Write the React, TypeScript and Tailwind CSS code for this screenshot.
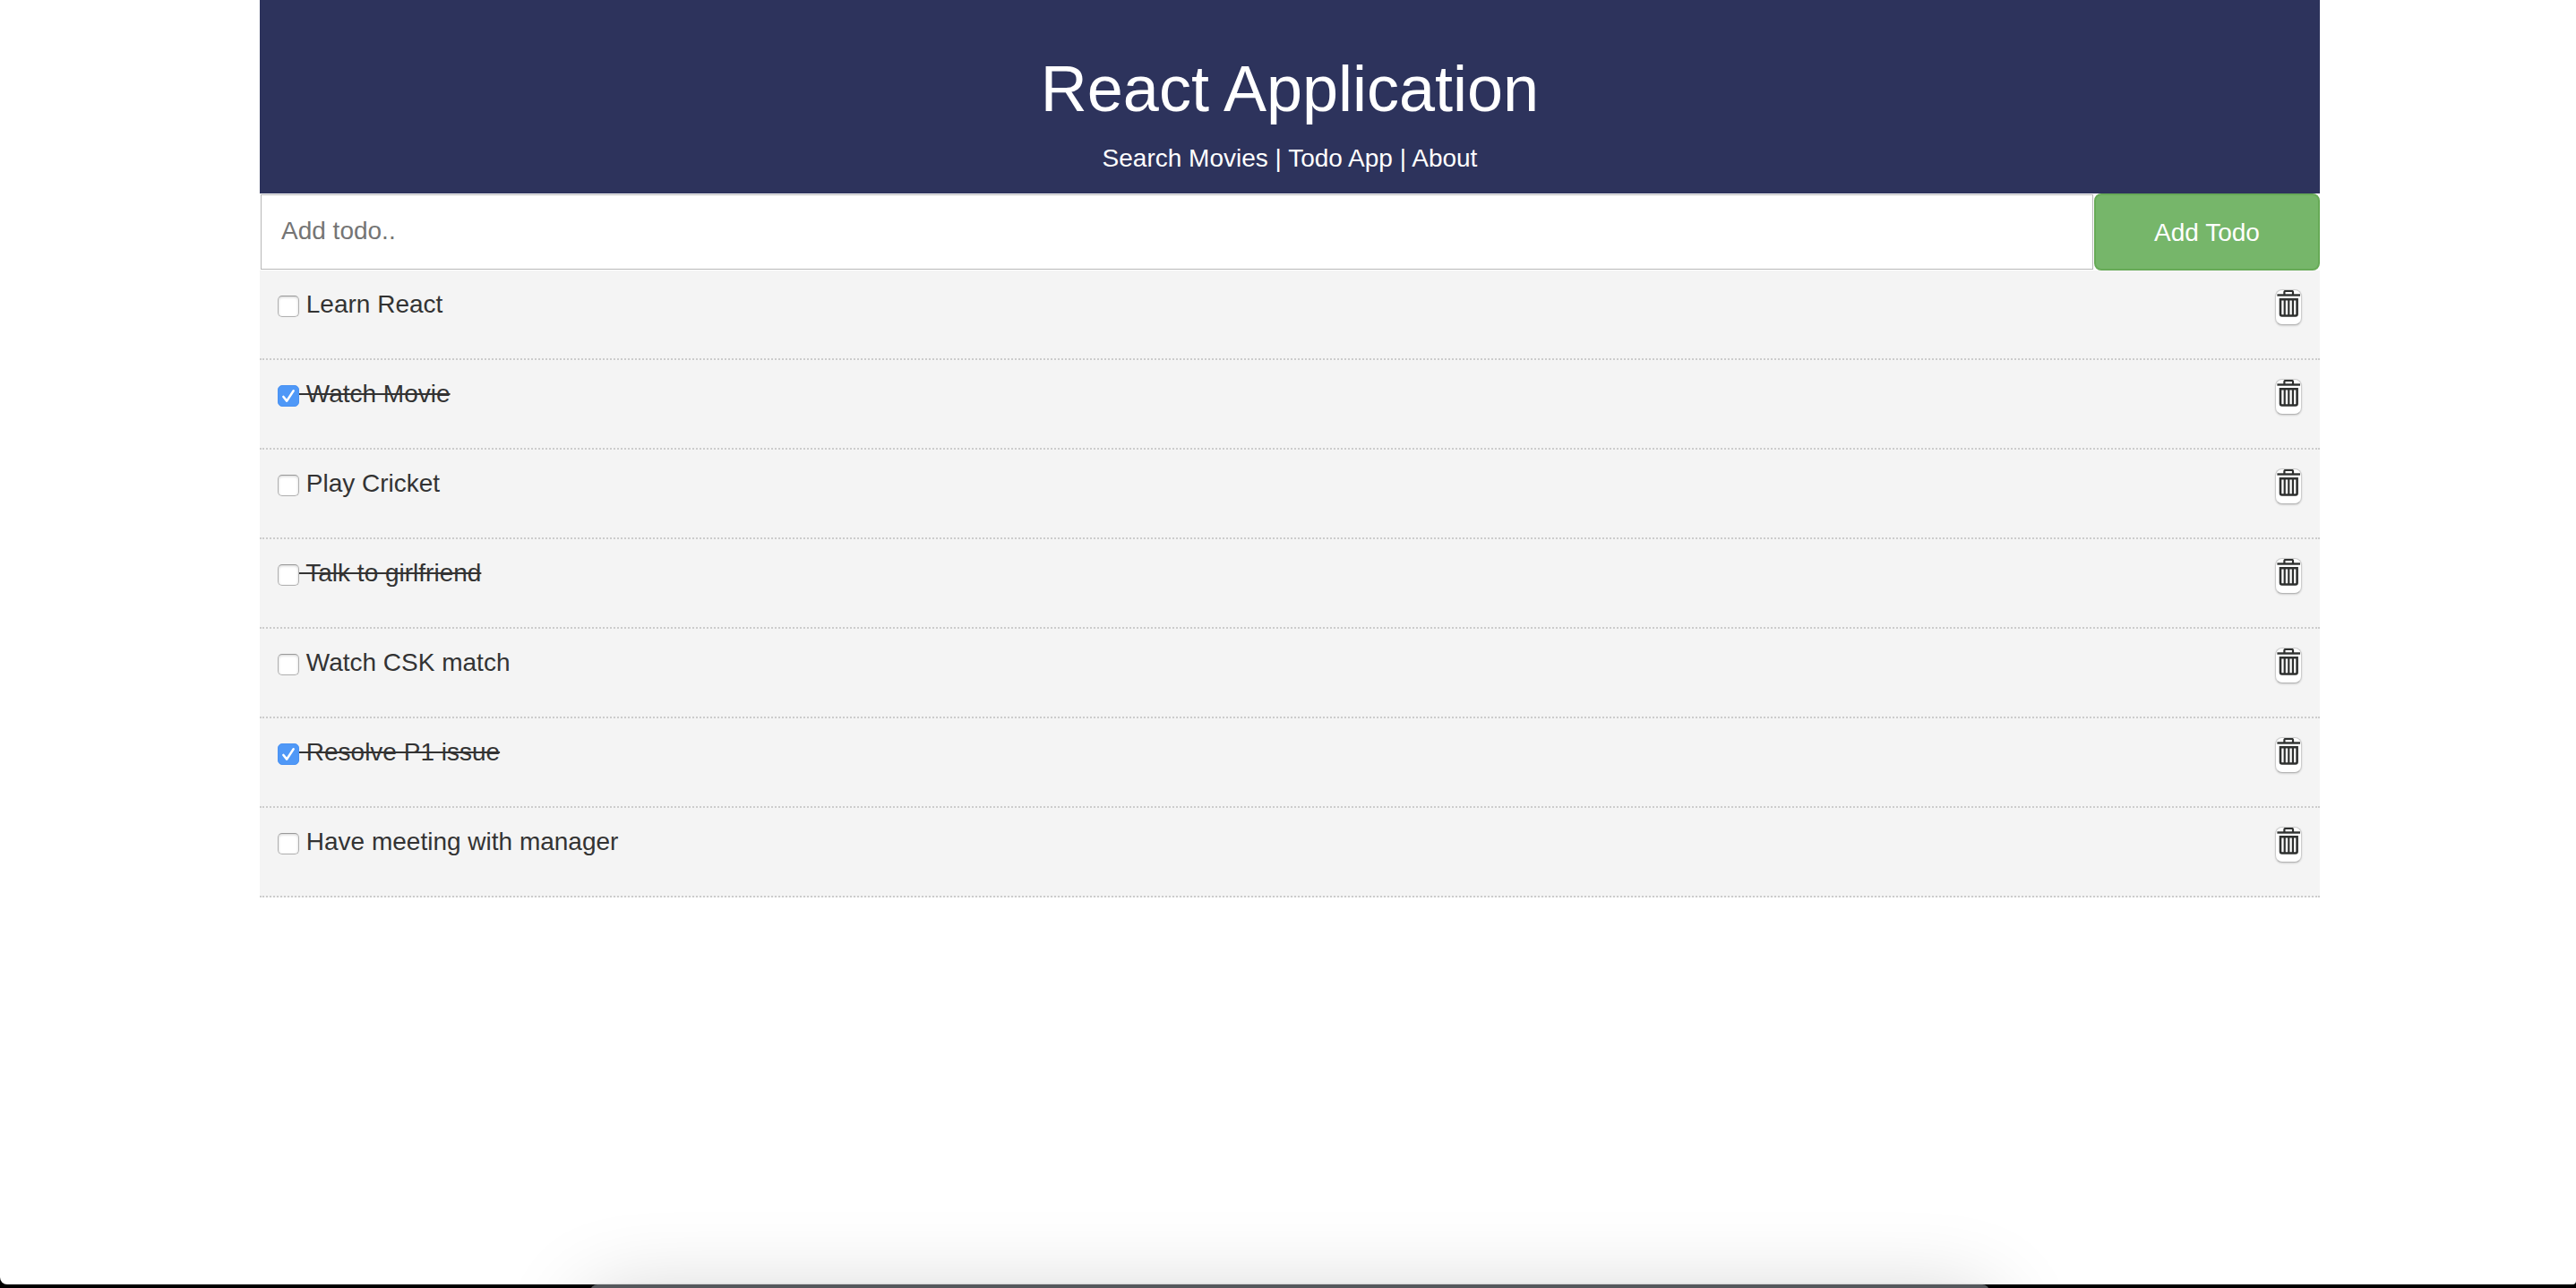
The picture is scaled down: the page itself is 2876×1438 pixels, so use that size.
const todos = [
  { title: "Learn React", done: false, checked: false },
  { title: "Watch Movie", done: true, checked: true },
  { title: "Play Cricket", done: false, checked: false },
  { title: "Talk to girlfriend", done: true, checked: false },
  { title: "Watch CSK match", done: false, checked: false },
  { title: "Resolve P1 issue", done: true, checked: true },
  { title: "Have meeting with manager", done: false, checked: false },
];

function TrashIcon() {
  return (
    <svg viewBox="0 0 26 30" className="h-[30px] w-[26px]" fill="none" stroke="#2f3130" aria-hidden="true">
      <path d="M0.4 5.5H26" strokeWidth="2.4" />
      <path d="M8.4 5V2.2Q8.4 1 9.6 1H16.8Q18 1 18 2.2V5" strokeWidth="2.2" />
      <path d="M4 10.2H22.6V26.8Q22.6 28.5 20.9 28.5H5.7Q4 28.5 4 26.8Z" strokeWidth="2.6" />
      <path d="M8.7 10V28M13.3 10V28M17.9 10V28" strokeWidth="2.2" />
    </svg>
  );
}

function Header() {
  return (
    <header className="bg-[#2d335c] pt-[57px] pb-[21px] text-center text-white">
      <h1 className="text-[72px] leading-[84px]">React Application</h1>
      <nav className="mt-[18px] text-[28px] leading-9">
        <a href="#search">Search Movies</a> | <a href="#todos">Todo App</a> | <a href="#about">About</a>
      </nav>
    </header>
  );
}

function AddTodo() {
  return (
    <form className="flex h-[86px]" onSubmit={(e) => e.preventDefault()}>
      <input
        type="text"
        aria-label="Add todo"
        placeholder="Add todo.."
        className="m-px min-w-0 flex-1 border border-[#b8b8b8] bg-white px-[22px] pb-0.5 outline-none placeholder:text-[#757575]"
      />
      <button type="submit" className="w-[252px] rounded-lg border-2 border-[#67aa57] bg-[#76b66a] pt-0.5 text-white">
        Add Todo
      </button>
    </form>
  );
}

function TodoItem({ id, title, done, checked }: { id: string; title: string; done: boolean; checked: boolean }) {
  return (
    <li className="flex h-[100px] items-start justify-between border-b-2 border-dotted border-[#ccc] px-5 pt-5">
      <div className="flex items-center">
        <span className="mt-1 grid size-6">
          <input
            id={id}
            type="checkbox"
            defaultChecked={checked}
            className="peer col-start-1 row-start-1 size-6 appearance-none rounded-[5px] border border-[#b0b0b0] border-t-[#999] bg-white shadow-[inset_0_1px_3px_rgba(0,0,0,0.18)] checked:border-[#4a92f2] checked:bg-[#4f98f7] checked:shadow-none"
          />
          <svg
            viewBox="0 0 24 24"
            className="pointer-events-none invisible col-start-1 row-start-1 size-6 peer-checked:visible"
            fill="none"
            stroke="white"
            strokeWidth="2.6"
            strokeLinecap="round"
            strokeLinejoin="round"
            aria-hidden="true"
          >
            <path d="M6.4 13L10.2 17.6L17.6 6.4" />
          </svg>
        </span>
        <label htmlFor={id} className={done ? "whitespace-pre leading-9 line-through" : "whitespace-pre leading-9"}>
          {" " + title}
        </label>
      </div>
      <button
        type="button"
        aria-label={"Delete " + title}
        className="mt-px flex h-10 w-[30px] items-start justify-center rounded-lg border border-[#ccc] border-b-[#b5b5b5] bg-white shadow-[0_1px_2px_rgba(0,0,0,0.15)]"
      >
        <TrashIcon />
      </button>
    </li>
  );
}

export default function App() {
  return (
    <div className="relative flex min-h-screen flex-col overflow-hidden bg-black pb-1 font-['Liberation_Sans',Arial,sans-serif] text-[28px] text-[#333]">
      <div className="flex-1 rounded-br-sm rounded-bl-lg bg-white pl-1">
        <main className="mx-auto max-w-[2300px]">
          <Header />
          <AddTodo />
          <ul className="bg-[#f4f4f4]">
            {todos.map((todo, i) => (
              <TodoItem key={todo.title} id={"todo-" + i} {...todo} />
            ))}
          </ul>
        </main>
      </div>
      <div className="pointer-events-none absolute inset-x-0 bottom-0 h-32 overflow-hidden">
        <div className="mx-auto mt-31 h-32 w-[1562px] max-w-full translate-x-0.5 rounded-lg bg-[#55585c] shadow-[0_0_2px_rgba(0,0,0,0.3),0_16px_100px_rgba(0,0,0,0.2)]" />
      </div>
    </div>
  );
}
